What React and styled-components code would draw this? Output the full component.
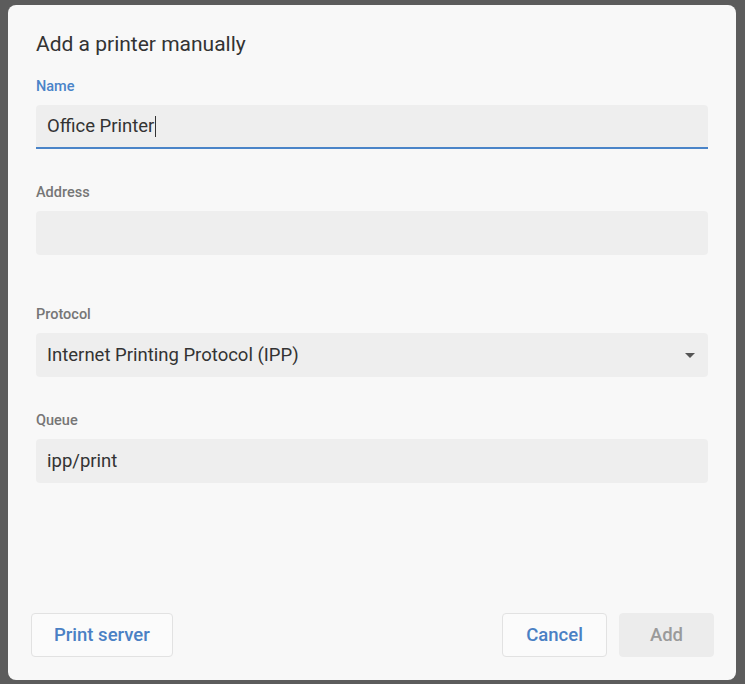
import React from "react";
import styled, { createGlobalStyle } from "styled-components";

const Global = createGlobalStyle`
  html, body { margin: 0; padding: 0; }
  body { font-family: Roboto, "Noto Sans", "Liberation Sans", sans-serif; background: #5c5c5c; }
`;

const Backdrop = styled.div`
  width: 745px;
  height: 684px;
  box-sizing: border-box;
  padding: 5px 9px 4px 8px;
  background: #5c5c5c;
  display: flex;
`;

const Dialog = styled.div`
  flex: 1;
  display: flex;
  flex-direction: column;
  background: #f8f8f8;
  border-radius: 8px;
  box-sizing: border-box;
  padding: 27px 0 23px;
`;

const Body = styled.div`
  flex: 1;
  padding: 0 28px;
  display: flex;
  flex-direction: column;
`;

const Title = styled.h1`
  margin: 0;
  font-size: 21px;
  line-height: 24px;
  font-weight: 400;
  color: #333;
`;

const Field = styled.div`
  display: flex;
  flex-direction: column;
  margin-top: ${(p) => p.$top}px;
`;

const Label = styled.div`
  font-size: 14.5px;
  line-height: 16px;
  padding-top: 2px;
  font-weight: 500;
  color: ${(p) => (p.$active ? "#4a84c8" : "#767676")};
  margin-bottom: 10px;
`;

const InputBox = styled.div`
  height: 44px;
  box-sizing: border-box;
  background: #eeeeee;
  border-radius: 4px 4px ${(p) => (p.$active ? "0 0" : "4px 4px")};
  border-bottom: ${(p) => (p.$active ? "2px solid #4a84c8" : "none")};
  display: flex;
  align-items: center;
  padding: 0 12px 0 11px;
  font-size: 18.5px;
  color: #333;
  gap: 8px;
`;

const Value = styled.span`
  flex: 1;
  white-space: nowrap;
`;

const Caret = styled.span`
  display: inline-block;
  width: 1px;
  height: 21px;
  background: #333;
  vertical-align: middle;
  margin-left: 1px;
`;

const Footer = styled.div`
  display: flex;
  align-items: center;
  padding: 0 22px 0 23px;
  gap: 12px;
`;

const Spacer = styled.div`
  flex: 1;
`;

const Button = styled.button`
  height: 44px;
  box-sizing: border-box;
  padding: 0 ${(p) => p.$pad}px;
  border-radius: 4px;
  font-family: inherit;
  font-size: 18.5px;
  font-weight: 500;
  border: 1px solid ${(p) => (p.$disabled ? "#ececec" : "#e2e2e2")};
  background: ${(p) => (p.$disabled ? "#ececec" : "#fbfbfb")};
  color: ${(p) => (p.$disabled ? "#9a9a9a" : "#4a80c4")};
`;

export default function App() {
  return (
    <>
      <Global />
      <Backdrop>
        <Dialog>
          <Body>
            <Title>Add a printer manually</Title>
            <Field $top={21}>
              <Label $active>Name</Label>
              <InputBox $active>
                <Value>
                  Office Printer<Caret />
                </Value>
              </InputBox>
            </Field>
            <Field $top={34}>
              <Label>Address</Label>
              <InputBox />
            </Field>
            <Field $top={50}>
              <Label>Protocol</Label>
              <InputBox>
                <Value>Internet Printing Protocol (IPP)</Value>
                <svg width="12" height="7" viewBox="0 0 12 7">
                  <path d="M1 1h10L6 6z" fill="#555" />
                </svg>
              </InputBox>
            </Field>
            <Field $top={34}>
              <Label>Queue</Label>
              <InputBox>
                <Value>ipp/print</Value>
              </InputBox>
            </Field>
          </Body>
          <Footer>
            <Button $pad={22}>Print server</Button>
            <Spacer />
            <Button $pad={23}>Cancel</Button>
            <Button $pad={30} $disabled>
              Add
            </Button>
          </Footer>
        </Dialog>
      </Backdrop>
    </>
  );
}
